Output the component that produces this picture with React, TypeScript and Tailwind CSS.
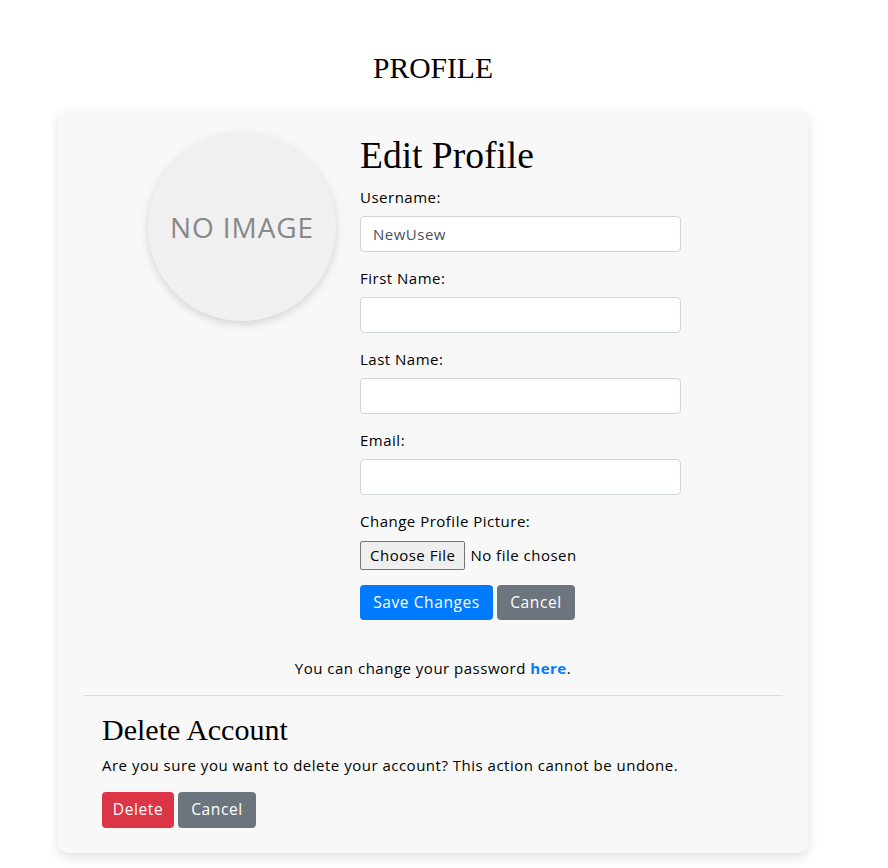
import React from "react";

const sans = "font-['Open_Sans',sans-serif]";
const serif = "font-['Liberation_Serif',serif]";
const body = "text-[15px] tracking-[0.5px]";
const btn = "text-[15.5px] tracking-[0.6px] text-white rounded-[4px]";

function Field({ label, value }: { label: string; value?: string }) {
  return (
    <div className="mb-[15.5px]">
      <label className={`block ${body} leading-[21px] text-black mb-[8.5px]`}>{label}</label>
      <input
        type="text"
        defaultValue={value}
        className={`block w-[321px] h-[36px] rounded-[4px] border border-[#ced4da] bg-white px-[12px] ${body} text-[#495057] outline-none`}
      />
    </div>
  );
}

export default function App() {
  return (
    <div className={`w-[866px] bg-white pb-[15px] ${sans}`}>
      <h1 className={`${serif} text-center text-[29.6px] leading-[34px] pt-[51px] text-black`}>PROFILE</h1>
      <div className="mx-[58px] mt-[25px] rounded-[10px] bg-[#f8f8f8] px-[25px] pt-[23px] pb-[25px] shadow-[0_4px_12px_rgba(0,0,0,0.12)]">
        <div className="flex">
          <div className="ml-[65px] mr-[24px] flex h-[188px] w-[188px] shrink-0 items-center justify-center rounded-full bg-[#f0f0f0] shadow-[0_3px_10px_rgba(0,0,0,0.15)]">
            <span className="text-[28px] text-[#888888] tracking-[0.9px]">NO IMAGE</span>
          </div>
          <div className="w-[321px]">
            <h2 className={`${serif} text-[37.5px] leading-[43px] mt-[1px] mb-[9.5px] text-black`}>Edit Profile</h2>
            <Field label="Username:" value="NewUsew" />
            <Field label="First Name:" />
            <Field label="Last Name:" />
            <Field label="Email:" />
            <label className={`block ${body} leading-[21px] text-black mb-[9.5px]`}>Change Profile Picture:</label>
            <input
              type="file"
              className={`block h-[29px] ${body} text-black file:mr-[5px] file:h-[29px] file:rounded-[2px] file:border file:border-[#767676] file:bg-[#efefef] file:px-[9px] file:text-[15px] file:tracking-[0.5px] file:text-black`}
            />
            <div className="mt-[15px] flex gap-[4px]">
              <button className={`h-[35px] w-[133px] bg-[#007bff] ${btn}`}>Save Changes</button>
              <button className={`h-[35px] w-[78px] bg-[#6c757d] ${btn}`}>Cancel</button>
            </div>
          </div>
        </div>
        <p className={`mt-[37.5px] text-center ${body} leading-[21px] text-black`}>
          You can change your password <a className="font-bold text-[#007bff]">here</a>.
        </p>
        <hr className="mt-[16.5px] border-t border-[#dddddd]" />
        <div className="px-[19px]">
          <h2 className={`${serif} text-[30px] leading-[34px] mt-[17px] text-black`}>Delete Account</h2>
          <p className={`mt-[8px] ${body} leading-[21px] text-black`}>
            Are you sure you want to delete your account? This action cannot be undone.
          </p>
          <div className="mt-[15.5px] flex gap-[4px]">
            <button className={`h-[36px] w-[72px] bg-[#dc3545] ${btn}`}>Delete</button>
            <button className={`h-[36px] w-[78px] bg-[#6c757d] ${btn}`}>Cancel</button>
          </div>
        </div>
      </div>
    </div>
  );
}
